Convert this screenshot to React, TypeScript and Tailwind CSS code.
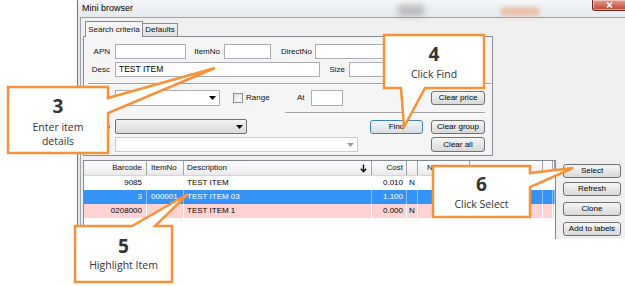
import React from "react"

const ORANGE = "#f7923a"

function Input({ className = "", children }: { className?: string; children?: React.ReactNode }) {
  return (
    <div className={`flex h-[15px] shrink-0 items-center border border-[#abadb3] bg-white pl-[3px] text-black ${className}`}>
      {children}
    </div>
  )
}

function Arrow({ color = "#000" }: { color?: string }) {
  return (
    <svg width="7" height="4" viewBox="0 0 7 4" className="shrink-0">
      <polygon points="0,0 7,0 3.5,4" fill={color} />
    </svg>
  )
}

function SortDown() {
  return (
    <svg width="7" height="9" viewBox="0 0 7 9" className="shrink-0">
      <path d="M3.5 0.5 V7.5 M0.8 4.8 L3.5 7.8 L6.2 4.8" stroke="#111" strokeWidth="1.4" fill="none" />
    </svg>
  )
}

function Btn({ className = "", focus = false, children }: { className?: string; focus?: boolean; children: React.ReactNode }) {
  return (
    <div
      className={`flex shrink-0 items-center justify-center rounded-[3px] border bg-linear-to-b text-black ${
        focus ? "border-[#3c7fb1] from-[#f2f8fc] to-[#d6dde3]" : "border-[#707070] from-[#f6f6f6] to-[#d8d8d8]"
      } ${className}`}
    >
      {children}
    </div>
  )
}

const cols = [
  { w: "w-[63px]", align: "justify-end pr-[4px]" },
  { w: "w-[37px]", align: "justify-start pl-[4px]" },
  { w: "w-[188px]", align: "justify-start pl-[3px]" },
  { w: "w-[35px]", align: "justify-end pr-[3px]" },
  { w: "w-[11px]", align: "justify-start pl-[2px]" },
  { w: "w-[52px]", align: "justify-start pl-[9px]" },
  { w: "w-[73px]", align: "justify-start" },
  { w: "w-[10px]", align: "justify-start" },
  { w: "flex-1", align: "justify-start" },
]

const rows = [
  { bg: "bg-white text-black", line: "border-white", cells: ["9085", "", "TEST ITEM", "0.010", "N", "", "", "", ""] },
  { bg: "bg-[#3593f5] text-white", line: "border-[#8cc0f7]", cells: ["3", "000001", "TEST ITEM 03", "1.100", "", "", "", "", ""] },
  { bg: "bg-[#ffd3d3] text-black", line: "border-white", cells: ["0208000", "", "TEST ITEM 1", "0.000", "N", "", "", "", ""] },
]

function Grid() {
  const head = ["Barcode", "ItemNo", "Description", "Cost", "", "N", "", "", ""]
  return (
    <div className="h-full w-[473px] shrink-0 border-l border-r border-t border-[#828790] bg-white">
      <div className="flex h-[15px] border-b border-[#d5d5d5] bg-linear-to-b from-white to-[#e9e9e9] text-[#111]">
        {head.map((h, i) => (
          <div
            key={i}
            className={`flex h-full items-center border-r border-[#a3a3a3] ${cols[i].w} ${
              i === 2 ? "justify-between pl-[3px] pr-[4px]" : cols[i].align
            }`}
          >
            <span>{h}</span>
            {i === 2 && <SortDown />}
          </div>
        ))}
      </div>
      {rows.map((r, ri) => (
        <div key={ri} className={`flex h-[14px] ${r.bg}`}>
          {r.cells.map((c, i) => (
            <div key={i} className={`flex h-full items-center border-r ${r.line} ${cols[i].w} ${cols[i].align}`}>
              {c}
            </div>
          ))}
        </div>
      ))}
    </div>
  )
}

function Callouts() {
  return (
    <>
      <svg className="pointer-events-none absolute left-0 top-0" width="625" height="286" viewBox="0 0 625 286">
        <g fill="white" stroke={ORANGE} strokeWidth="2.5" strokeLinejoin="miter">
          <polygon points="8,87 108,87 108,98 215,68 108,113 108,153 8,153" />
          <polygon points="384,35 484,35 484,88 425,88 404,127 401,88 384,88" />
          <polygon points="75,226 132,226 188,194 155,226 172,226 172,282 75,282" />
          <polygon points="433,166 530,166 530,173 573,168 530,187 530,217 433,217" />
        </g>
      </svg>
      <div className="absolute left-[8px] top-[96px] w-[100px] text-center text-[#333]">
        <div className="text-[19px] leading-[20px] font-bold">3</div>
        <div className="mt-[4px] text-[10.5px] leading-[14px]">Enter item</div>
        <div className="text-[10.5px] leading-[14px]">details</div>
      </div>
      <div className="absolute left-[384px] top-[44px] w-[100px] text-center text-[#333]">
        <div className="text-[19px] leading-[20px] font-bold">4</div>
        <div className="mt-[3px] text-[10.5px] leading-[14px]">Click Find</div>
      </div>
      <div className="absolute left-[75px] top-[236px] w-[97px] text-center text-[#333]">
        <div className="text-[19px] leading-[20px] font-bold">5</div>
        <div className="mt-[2px] text-[10.5px] leading-[14px]">Highlight Item</div>
      </div>
      <div className="absolute left-[433px] top-[174px] w-[97px] text-center text-[#333]">
        <div className="text-[19px] leading-[20px] font-bold">6</div>
        <div className="mt-[3px] text-[10.5px] leading-[14px]">Click Select</div>
      </div>
    </>
  )
}

export default function App() {
  return (
    <div className="relative h-[286px] w-[625px] overflow-hidden bg-white font-['Liberation_Sans',Arial,sans-serif] text-[8px]">
      <div className="ml-[77px] flex h-[239px] w-[548px] flex-col border-l border-[#6f7780] bg-[#e4e9ee]">
        {/* title bar */}
        <div className="relative flex h-[17px] shrink-0 items-center bg-linear-to-b from-[#f3f5f7] to-[#e6eaee] pl-[4px] text-[9px] text-black">
          <span className="absolute left-[320px] top-[5px] h-[11px] w-[26px] bg-[#8a8a8a] opacity-50 blur-[3px]" />
          <span className="absolute left-[423px] top-[7px] h-[9px] w-[38px] bg-[#e9a27a] opacity-60 blur-[2px]" />
          <span className="relative">Mini browser</span>
          <div className="absolute right-[-4px] top-0 flex h-[11px] w-[37px] items-center justify-center rounded-b-[3px] border border-t-0 border-[#6b2a20] bg-linear-to-b from-[#e59c8c] to-[#b9432f] shadow-[inset_0_0_0_1px_rgba(255,255,255,0.45)]">
            <svg width="7" height="6" viewBox="0 0 7 6" className="mr-[3px]">
              <path d="M1 0.5 L6 5.5 M6 0.5 L1 5.5" stroke="white" strokeWidth="1.6" />
            </svg>
          </div>
        </div>

        {/* body */}
        <div className="ml-[2px] flex flex-1 flex-col border-l border-t border-[#9aa3ad] bg-[#f0f0f0] pl-[2px] pt-[3px] text-[#111]">
          {/* tabs */}
          <div className="ml-[2px] flex h-[15px] items-end">
            <div className="relative z-10 -mb-px flex h-[16px] w-[58px] items-center justify-center border-x border-t border-[#898c95] bg-[#f5f5f5]">
              Search criteria
            </div>
            <div className="flex h-[13px] w-[35px] items-center justify-center border-r border-t border-[#898c95] bg-linear-to-b from-[#f2f2f2] to-[#e1e1e1]">
              Defaults
            </div>
          </div>

          {/* tab panel */}
          <div className="flex h-[120px] w-[410px] shrink-0 flex-col border border-[#898c95] bg-[#f5f5f5] pt-[7px]">
            <div className="flex h-[15px] items-center">
              <div className="w-[26px] shrink-0 text-right">APN</div>
              <Input className="ml-[5px] w-[71px]" />
              <div className="w-[34px] shrink-0 text-right">ItemNo</div>
              <Input className="ml-[4px] w-[47px]" />
              <div className="w-[41px] shrink-0 text-right">DirectNo</div>
              <Input className="ml-[3px] w-[90px]" />
            </div>
            <div className="mt-[3px] flex h-[15px] items-center">
              <div className="w-[26px] shrink-0 text-right">Desc</div>
              <Input className="ml-[5px] w-[205px] text-[8.5px]">TEST ITEM</Input>
              <div className="w-[25px] shrink-0 text-right">Size</div>
              <Input className="ml-[4px] w-[60px]" />
            </div>
            <div className="ml-[4px] mr-[1px] mt-[6px] h-[2px] border-b border-t border-b-white border-t-[#a0a0a0]" />
            <div className="mt-[5px] flex h-[16px] items-center">
              <div className="w-[31px] shrink-0" />
              <div className="flex h-[16px] w-[105px] items-center justify-end border border-[#abadb3] bg-white pr-[3px]">
                <Arrow />
              </div>
              <div className="ml-[13px] flex w-[64px] items-center">
                <div className="h-[10px] w-[10px] border border-[#8e8f8f] bg-linear-to-br from-[#dcdcdc] to-white" />
                <span className="ml-[3px]">Range</span>
              </div>
              <div className="w-[8px]">At</div>
              <Input className="ml-[6px] h-[16px] w-[32px]" />
              <Btn className="ml-auto mr-[7px] h-[14px] w-[54px]">Clear price</Btn>
            </div>
            <div className="ml-[201px] mr-[7px] mt-[6px] h-[2px] border-b border-t border-b-white border-t-[#a0a0a0]" />
            <div className="mt-[5px] flex h-[15px] items-center">
              <div className="w-[26px] shrink-0 text-right">Group</div>
              <div className="ml-[5px] flex h-[15px] w-[132px] items-center justify-end rounded-[2px] border border-[#707070] bg-linear-to-b from-[#f2f2f2] to-[#dadada] pr-[3px]">
                <Arrow />
              </div>
              <Btn focus className="ml-auto h-[14px] w-[53px]">Find</Btn>
              <Btn className="ml-[8px] mr-[7px] h-[14px] w-[54px]">Clear group</Btn>
            </div>
            <div className="mt-[3px] flex h-[15px] items-center">
              <div className="w-[31px] shrink-0" />
              <div className="flex h-[15px] w-[243px] items-center justify-end border border-[#c9cbcf] bg-white pr-[3px]">
                <Arrow color="#9a9a9a" />
              </div>
              <Btn className="ml-auto mr-[7px] h-[15px] w-[54px]">Clear all</Btn>
            </div>
          </div>

          {/* grid + side buttons */}
          <div className="mt-[4px] flex flex-1">
            <Grid />
            <div className="flex flex-1 flex-col pl-[7px] pt-[4px]">
              <Btn className="h-[14px] w-[58px]">Select</Btn>
              <Btn className="mt-[4px] h-[14px] w-[58px]">Refresh</Btn>
              <Btn className="mt-[6px] h-[14px] w-[58px]">Clone</Btn>
              <Btn className="mt-[6px] h-[14px] w-[58px]">Add to labels</Btn>
            </div>
          </div>
        </div>
      </div>

      <div className="font-['Open_Sans',sans-serif]">
        <Callouts />
      </div>
    </div>
  )
}
